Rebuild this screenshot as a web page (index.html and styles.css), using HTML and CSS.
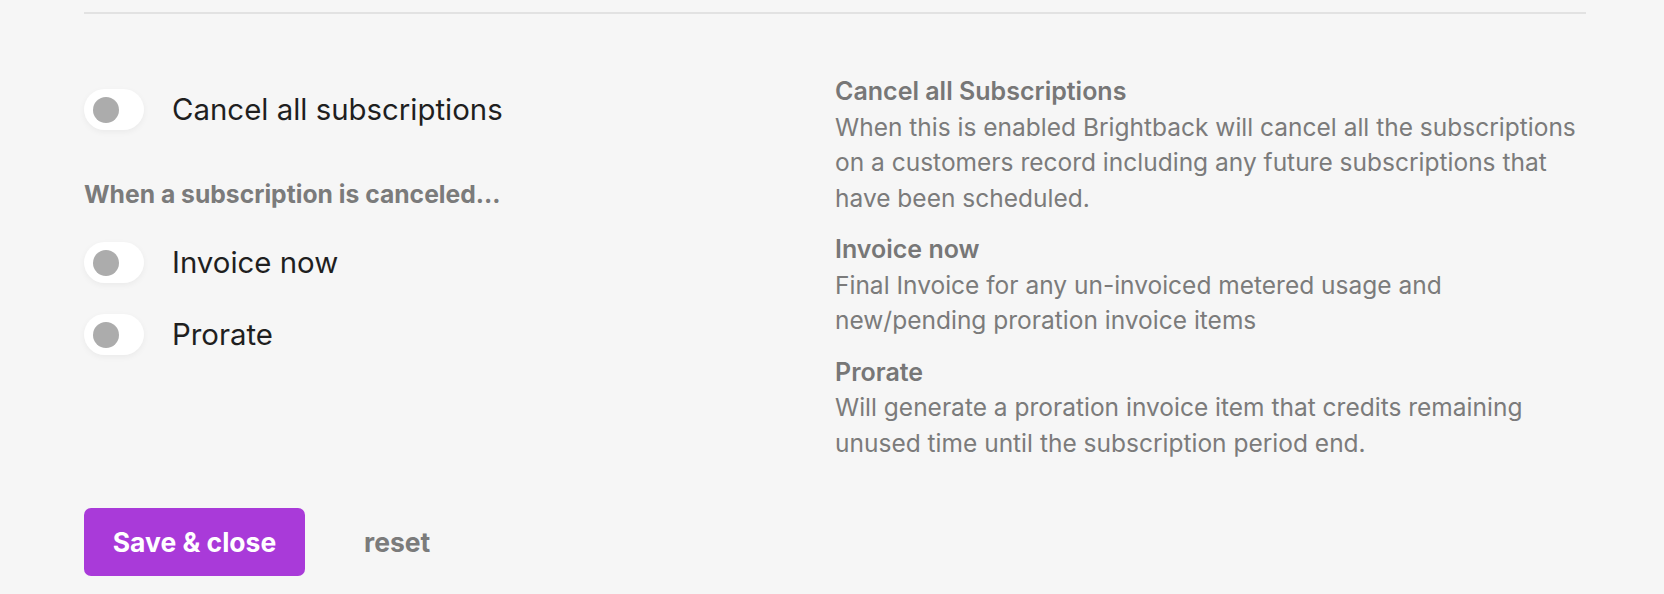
FILE: index.html
```html
<!DOCTYPE html>
<html lang="en">
  <head>
    <meta charset="UTF-8" />
    <meta name="viewport" content="width=device-width, initial-scale=1.0" />
    <title>Cancellation settings</title>
    <link rel="stylesheet" href="styles.css">
  </head>
  <body>
    <div class="panel">
      <hr class="divider" />
      <div class="columns">
        <div class="options">
          <label class="option first">
            <span class="toggle"><span class="knob"></span></span>
            <span class="option-label">Cancel all subscriptions</span>
          </label>
          <h4 class="subhead">When a subscription is canceled...</h4>
          <label class="option">
            <span class="toggle"><span class="knob"></span></span>
            <span class="option-label">Invoice now</span>
          </label>
          <label class="option">
            <span class="toggle"><span class="knob"></span></span>
            <span class="option-label">Prorate</span>
          </label>
        </div>
        <div class="help">
          <div class="help-item">
            <h5>Cancel all Subscriptions</h5>
            <p>When this is enabled Brightback will cancel all the subscriptions on a customers record including any future subscriptions that have been scheduled.</p>
          </div>
          <div class="help-item">
            <h5>Invoice now</h5>
            <p>Final Invoice for any un-invoiced metered usage and new/pending proration invoice items</p>
          </div>
          <div class="help-item">
            <h5>Prorate</h5>
            <p>Will generate a proration invoice item that credits remaining unused time until the subscription period end.</p>
          </div>
        </div>
      </div>
      <div class="actions">
        <button class="save">Save &amp; close</button>
        <a class="reset" href="#">reset</a>
      </div>
    </div>
  </body>
</html>
```

FILE: styles.css
```css
body {
  margin: 0;
  padding: 0;
  background: #f6f6f6;
  font-family: Inter, "Liberation Sans", sans-serif;
}
.panel {
  padding: 0 78px 0 84px;
}
.divider {
  margin: 12px 0 0;
  border: none;
  border-top: 2px solid #e2e2e2;
}
.columns {
  display: grid;
  grid-template-columns: 1fr 1fr;
  margin-top: 60px;
}
.options {
  display: flex;
  flex-direction: column;
  align-items: flex-start;
}
.option {
  display: flex;
  align-items: center;
  gap: 28px;
  margin-bottom: 31px;
  cursor: pointer;
}
.option.first {
  margin-top: 15px;
  margin-bottom: 0;
}
.toggle {
  display: flex;
  align-items: center;
  width: 60px;
  height: 41px;
  padding-left: 9px;
  box-sizing: border-box;
  border-radius: 21px;
  background: #fff;
  box-shadow: 0 2px 6px rgba(0, 0, 0, 0.05);
}
.knob {
  width: 26px;
  height: 26px;
  border-radius: 50%;
  background: #acacac;
}
.option-label {
  font-size: 29.4px;
  line-height: 36px;
  color: #1f1f1f;
}
.subhead {
  margin: 49px 0 33px;
  font-size: 24.7px;
  line-height: 30px;
  font-weight: 700;
  color: #7b7b7b;
}
.help {
  color: #7b7b7b;
  font-size: 24.5px;
  line-height: 35.5px;
}
.help-item {
  margin-bottom: 16px;
}
.help-item:last-child {
  margin-bottom: 0;
}
.help h5 {
  margin: 0;
  font-size: 25px;
  font-weight: 600;
  color: #777;
}
.help p {
  margin: 0;
}
.actions {
  display: flex;
  align-items: center;
  gap: 59px;
  margin-top: 47px;
}
.save {
  width: 221px;
  height: 68px;
  border: none;
  border-radius: 7px;
  background: #a93ad9;
  color: #fff;
  font-family: inherit;
  font-size: 26.5px;
  font-weight: 700;
  cursor: pointer;
}
.reset {
  font-size: 26.5px;
  font-weight: 700;
  color: #7b7b7b;
  text-decoration: none;
}
```
